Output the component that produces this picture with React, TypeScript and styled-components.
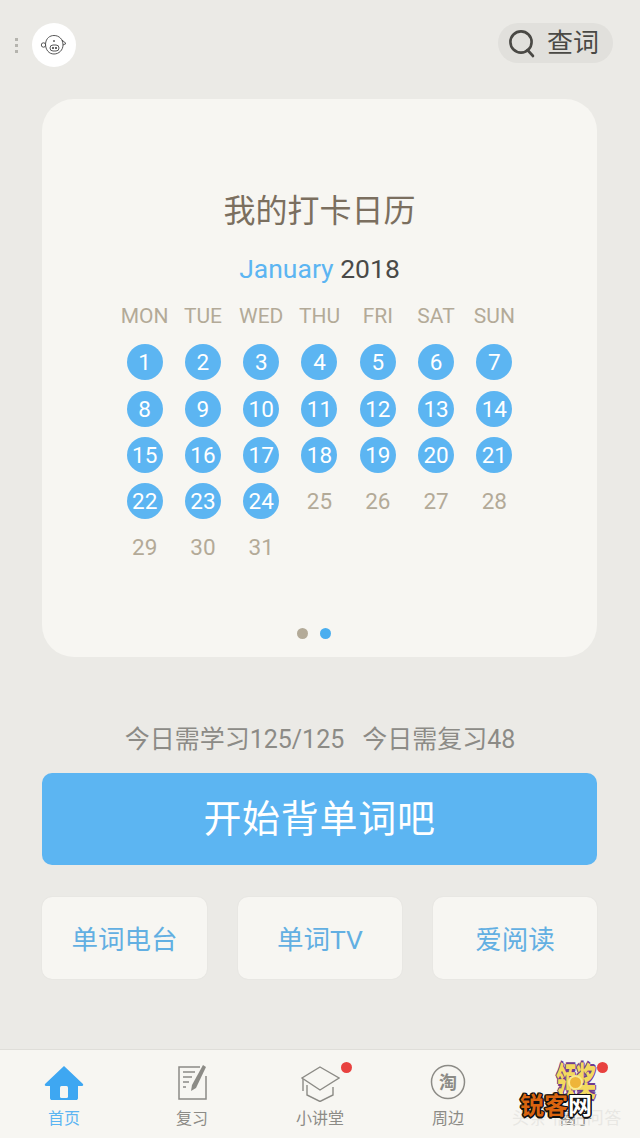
import React from "react";
import styled, { createGlobalStyle } from "styled-components";

const GlobalStyle = createGlobalStyle`
  html, body {
    margin: 0;
    padding: 0;
    background: #ebeae6;
  }
  * {
    box-sizing: border-box;
  }
`;

const CJK = `Roboto, "Noto Sans CJK SC", sans-serif`;

const Page = styled.div`
  width: 640px;
  height: 1138px;
  background: #ebeae6;
  display: flex;
  flex-direction: column;
  font-family: ${CJK};
  overflow: hidden;
`;

const TopBar = styled.header`
  height: 99px;
  padding: 23px 27px 0 12px;
  display: flex;
  align-items: flex-start;
`;

const Kebab = styled.div`
  width: 8px;
  height: 44px;
  margin-right: 12px;
  display: flex;
  flex-direction: column;
  justify-content: center;
  align-items: center;
  gap: 3px;

  i {
    width: 3px;
    height: 3px;
    background: #b5b4ae;
    display: block;
  }
`;

const Avatar = styled.div`
  width: 44px;
  height: 44px;
  border-radius: 50%;
  background: #fff;
  display: flex;
  align-items: center;
  justify-content: center;
`;

const SearchPill = styled.div`
  margin-left: auto;
  width: 115px;
  height: 40px;
  border-radius: 20px;
  background: #e1e0dc;
  display: flex;
  align-items: center;
  padding-left: 9px;
  gap: 10px;
  color: #4a4945;
  font-size: 26px;
  line-height: 40px;
`;

const Card = styled.section`
  margin: 0 43px 0 42px;
  height: 558px;
  border-radius: 32px;
  background: #f7f6f2;
  display: flex;
  flex-direction: column;
  align-items: center;
`;

const CardTitle = styled.h2`
  margin: 89px 0 0;
  font-size: 32px;
  line-height: 46px;
  font-weight: 400;
  color: #7b6f5f;
`;

const MonthLine = styled.div`
  margin-top: 18px;
  font-size: 26.5px;
  line-height: 34px;
  color: #4a4a48;

  b {
    font-weight: 400;
    color: #5cb5f2;
  }
`;

const Calendar = styled.div`
  margin-top: 7px;
  width: 408px;
  display: grid;
  grid-template-columns: repeat(7, 1fr);
  grid-auto-rows: 46.25px;
  justify-items: center;
  align-items: center;
`;

const WeekDay = styled.div`
  font-size: 21px;
  color: #b3aa98;
  line-height: 46px;
  margin-top: -1px;
`;

const Day = styled.div<{ $done: boolean }>`
  width: 36px;
  height: 36px;
  border-radius: 50%;
  display: flex;
  align-items: center;
  justify-content: center;
  font-size: 22.5px;
  background: ${(p) => (p.$done ? "#5cb5f2" : "transparent")};
  color: ${(p) => (p.$done ? "#fff" : "#b3aa98")};
`;

const Pager = styled.div`
  margin-top: auto;
  margin-bottom: 18px;
  margin-right: 12px;
  display: flex;
  gap: 12px;
`;

const PagerDot = styled.i<{ $active?: boolean }>`
  width: 11px;
  height: 11px;
  border-radius: 50%;
  display: block;
  background: ${(p) => (p.$active ? "#4aaeef" : "#b3aa98")};
`;

const Stats = styled.div`
  margin-top: 63px;
  height: 40px;
  display: flex;
  justify-content: center;
  gap: 18px;
  font-size: 25px;
  line-height: 40px;
  color: #8c8b86;
`;

const StartButton = styled.button`
  margin: 13px 43px 0 42px;
  height: 92px;
  border: 0;
  border-radius: 10px;
  background: #5cb5f2;
  color: #fff;
  font-family: ${CJK};
  font-size: 38px;
  line-height: 92px;
  letter-spacing: 0.7px;
  padding: 0;
`;

const LinkRow = styled.div`
  margin: 32px 43px 0 42px;
  display: grid;
  grid-template-columns: 165px 164px 164px;
  justify-content: space-between;
`;

const LinkCard = styled.div`
  height: 82px;
  border-radius: 10px;
  background: #f7f6f2;
  box-shadow: 0 0 2px rgba(0, 0, 0, 0.06);
  display: flex;
  align-items: center;
  justify-content: center;
  color: #62afe2;
  font-size: 26.5px;
  padding-bottom: 2px;
`;

const TabBar = styled.nav`
  margin-top: auto;
  height: 89px;
  border-top: 1px solid #dfded9;
  background: #f7f6f2;
  display: grid;
  grid-template-columns: repeat(5, 128px);
`;

const Tab = styled.div<{ $active?: boolean }>`
  position: relative;
  display: flex;
  flex-direction: column;
  align-items: center;
  padding-top: 12px;
  color: ${(p) => (p.$active ? "#5cb5f2" : "#8c8b86")};
  font-size: 16px;
  line-height: 20px;

  svg {
    display: block;
    height: 40px;
  }

  span {
    margin-top: 7px;
  }
`;

const RedDot = styled.i`
  position: absolute;
  top: 12px;
  left: 85px;
  width: 11px;
  height: 11px;
  border-radius: 50%;
  background: #e8413f;
`;

const GameIcon = styled.div`
  position: relative;
  width: 40px;
  height: 40px;
  font-size: 20px;
  line-height: 40px;
  font-weight: 700;
  text-align: center;
  white-space: nowrap;
  color: #f3d95f;
  text-shadow: 1px 0 #6e3d8f, -1px 0 #6e3d8f, 0 1px #6e3d8f, 0 -1px #6e3d8f;

  b {
    display: block;
    transform: scaleY(1.9);
  }

  i {
    position: absolute;
    left: 12px;
    top: 13px;
    width: 15px;
    height: 15px;
    border-radius: 50%;
    background: #eeb53a;
    border: 2px solid #f9e98c;
  }
`;

const Watermark = styled.div`
  position: absolute;
  left: 520px;
  top: 1091px;
  font-size: 24px;
  line-height: 30px;
  font-weight: 700;
  color: #d9640f;
  white-space: nowrap;
  text-shadow: 1.5px 0 #111, -1.5px 0 #111, 0 1.5px #111, 0 -1.5px #111, 1px 1px #111, -1px -1px #111, 1px -1px #111, -1px 1px #111;

  em {
    font-style: normal;
    color: #fff;
  }
`;

const GhostMark = styled.div`
  position: absolute;
  left: 512px;
  top: 1106px;
  font-size: 17px;
  line-height: 24px;
  letter-spacing: 0.5px;
  color: rgba(228, 227, 223, 0.8);
  white-space: nowrap;
`;

const PigIcon = () => (
  <svg width="28" height="22" viewBox="0 0 28 22" fill="none" stroke="#444" strokeWidth="0.9">
    <path d="M5.5 10 C6 4 10 1.5 14 1.5 C19 1.5 23 5 23 11 C23 16 19 20 14 20 C9 20 5.5 16 5.5 10 Z" />
    <circle cx="3.5" cy="11" r="2.2" fill="#fff" />
    <path d="M22 6 L26 9.5 L23 11" />
    <rect x="10" y="11" width="9" height="6" rx="3" />
    <circle cx="13" cy="14" r="0.7" fill="#444" />
    <circle cx="16" cy="14" r="0.7" fill="#444" />
    <circle cx="14" cy="7" r="0.5" fill="#444" />
  </svg>
);

const SearchIcon = () => (
  <svg width="30" height="30" viewBox="0 0 30 30" fill="none" stroke="#4a4945" strokeWidth="2.6">
    <circle cx="14" cy="14" r="10.6" />
    <path d="M20.5 22 L26 28" strokeLinecap="round" />
  </svg>
);

const HomeIcon = () => (
  <svg width="40" height="40" viewBox="0 0 40 40">
    <path
      fill="#3ea7f2"
      d="M20 4 L39 22 C39.5 23 39 24 38 24 L34 24 L34 36 C34 37.5 33 38 32 38 L8 38 C7 38 6 37.5 6 36 L6 24 L2 24 C1 24 0.5 23 1 22 Z"
    />
    <rect x="16" y="24" width="8" height="12" rx="1.5" fill="#f7f6f2" />
  </svg>
);

const ReviewIcon = () => (
  <svg width="32" height="40" viewBox="0 0 32 40" fill="none" stroke="#8c8b86" strokeWidth="1.5">
    <path d="M24 5 L3 5 L3 37 L30 37 L30 14" />
    <path d="M7 10 H19 M7 15 H16 M7 20 H13 M7 25 H10" />
    <path d="M27 3 L30 5 L20 26 L15 29 L16 23 Z" fill="#8c8b86" stroke="none" />
  </svg>
);

const CapIcon = () => (
  <svg width="40" height="40" viewBox="0 0 40 40" fill="none" stroke="#8c8b86" strokeWidth="1.4">
    <path d="M20 5 L39 16 L20 28 L2 16 Z" />
    <path d="M3 17 V29" />
    <path d="M7 23 V33 L20 39.5 L33 33 V25" />
  </svg>
);

const TaoIcon = () => (
  <svg width="36" height="40" viewBox="0 0 36 40" fill="none">
    <circle cx="18" cy="20" r="16.5" stroke="#8c8b86" strokeWidth="1.5" />
    <text x="18" y="26.5" textAnchor="middle" fontSize="18" fontWeight="700" fill="#8c8b86" fontFamily="Noto Sans CJK SC">
      淘
    </text>
  </svg>
);

const days = Array.from({ length: 31 }, (_, i) => i + 1);
const weekDays = ["MON", "TUE", "WED", "THU", "FRI", "SAT", "SUN"];

const App = () => {
  return (
    <Page>
      <GlobalStyle />
      <TopBar>
        <Kebab>
          <i />
          <i />
          <i />
        </Kebab>
        <Avatar>
          <PigIcon />
        </Avatar>
        <SearchPill>
          <SearchIcon />
          查词
        </SearchPill>
      </TopBar>

      <Card>
        <CardTitle>我的打卡日历</CardTitle>
        <MonthLine>
          <b>January</b> 2018
        </MonthLine>
        <Calendar>
          {weekDays.map((d) => (
            <WeekDay key={d}>{d}</WeekDay>
          ))}
          {days.map((d) => (
            <Day key={d} $done={d <= 24}>
              {d}
            </Day>
          ))}
        </Calendar>
        <Pager>
          <PagerDot />
          <PagerDot $active />
        </Pager>
      </Card>

      <Stats>
        <span>今日需学习125/125</span>
        <span>今日需复习48</span>
      </Stats>
      <StartButton>开始背单词吧</StartButton>
      <LinkRow>
        <LinkCard>单词电台</LinkCard>
        <LinkCard>单词TV</LinkCard>
        <LinkCard>爱阅读</LinkCard>
      </LinkRow>

      <TabBar>
        <Tab $active>
          <HomeIcon />
          <span>首页</span>
        </Tab>
        <Tab>
          <ReviewIcon />
          <span>复习</span>
        </Tab>
        <Tab>
          <CapIcon />
          <span>小讲堂</span>
          <RedDot />
        </Tab>
        <Tab>
          <TaoIcon />
          <span>周边</span>
        </Tab>
        <Tab>
          <GameIcon>
            <b>领奖</b>
            <i />
          </GameIcon>
          <span>圈子</span>
          <RedDot />
        </Tab>
      </TabBar>
      <GhostMark>头条 悟空问答</GhostMark>
      <Watermark>
        锐客<em>网</em>
      </Watermark>
    </Page>
  );
};

export default App;
